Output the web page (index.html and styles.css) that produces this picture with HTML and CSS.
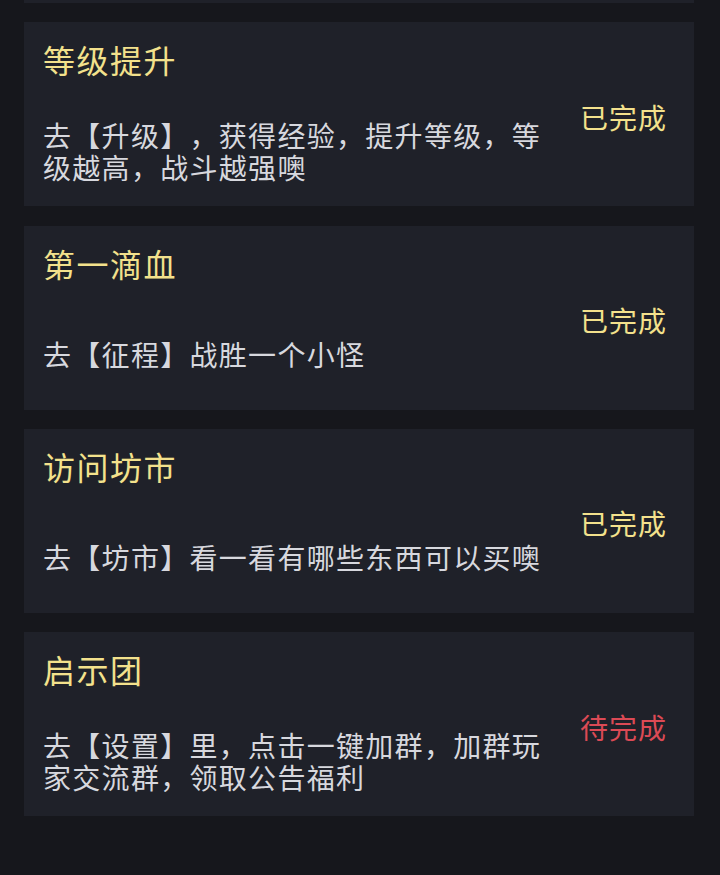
FILE: index.html
```html
<!DOCTYPE html>
<html lang="zh-CN">
<head>
    <meta charset="UTF-8">
    <meta name="viewport" content="width=device-width, initial-scale=1.0">
    <title>新手任务</title>
    <link rel="stylesheet" href="styles.css">
</head>
<body>
    <div class="task-list">
        <div class="task task-cut"></div>

        <div class="task">
            <div class="task-main">
                <h2 class="task-title">等级提升</h2>
                <div class="task-desc">
                    <p>去【升级】，获得经验，提升等级，等级越高，战斗越强噢</p>
                </div>
            </div>
            <div class="task-status done">已完成</div>
        </div>

        <div class="task">
            <div class="task-main">
                <h2 class="task-title">第一滴血</h2>
                <div class="task-desc">
                    <p>去【征程】战胜一个小怪</p>
                </div>
            </div>
            <div class="task-status done">已完成</div>
        </div>

        <div class="task">
            <div class="task-main">
                <h2 class="task-title">访问坊市</h2>
                <div class="task-desc">
                    <p>去【坊市】看一看有哪些东西可以买噢</p>
                </div>
            </div>
            <div class="task-status done">已完成</div>
        </div>

        <div class="task">
            <div class="task-main">
                <h2 class="task-title">启示团</h2>
                <div class="task-desc">
                    <p>去【设置】里，点击一键加群，加群玩家交流群，领取公告福利</p>
                </div>
            </div>
            <div class="task-status todo">待完成</div>
        </div>
    </div>
</body>
</html>
```

FILE: styles.css
```css
* {
    margin: 0;
    padding: 0;
    box-sizing: border-box;
    font-family: 'Noto Sans CJK SC', 'Noto Sans', sans-serif;
    text-spacing-trim: space-all;
}

body {
    background-color: #16171c;
    color: #d7d8de;
    min-height: 100vh;
}

.task-list {
    display: flex;
    flex-direction: column;
    gap: 19.3px;
    padding: 0 26px 0 24px;
}

.task {
    display: flex;
    align-items: center;
    height: 184px;
    background: #1f2129;
    padding: 15px 27px 16px 19px;
}

.task-cut {
    height: 3px;
    padding: 0;
}

.task-main {
    flex: 1;
    height: 100%;
    display: flex;
    flex-direction: column;
}

.task-title {
    font-size: 32px;
    font-weight: 400;
    line-height: 44px;
    letter-spacing: 1.5px;
    color: #f3e18c;
}

.task-desc {
    flex: 1;
    display: flex;
    align-items: center;
    margin-top: 30px;
}

.task-desc p {
    width: 515px;
    font-size: 28px;
    line-height: 32px;
    letter-spacing: 1.3px;
}

.task-status {
    font-size: 28px;
    letter-spacing: 1px;
    line-height: 32px;
    margin-top: 6px;
}

.task-status.done {
    color: #f3e18c;
}

.task-status.todo {
    color: #dc4a55;
}
```
